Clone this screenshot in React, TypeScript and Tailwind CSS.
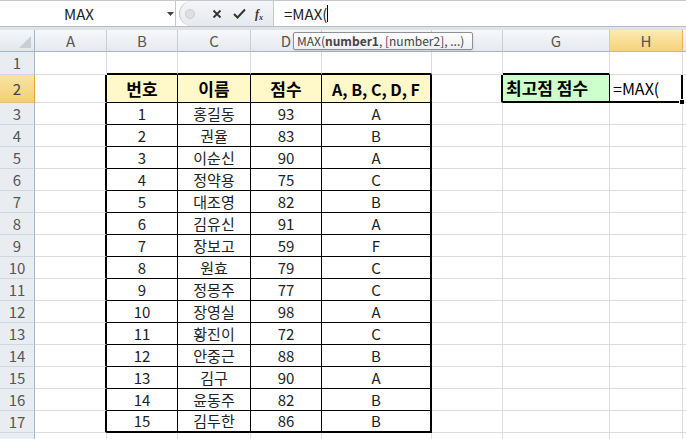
import React from 'react';

const FONT = { fontFamily: '"Noto Sans CJK KR", "Noto Sans", sans-serif' };

const students: [number, string, number, string][] = [
  [1, '홍길동', 93, 'A'],
  [2, '권율', 83, 'B'],
  [3, '이순신', 90, 'A'],
  [4, '정약용', 75, 'C'],
  [5, '대조영', 82, 'B'],
  [6, '김유신', 91, 'A'],
  [7, '장보고', 59, 'F'],
  [8, '원효', 79, 'C'],
  [9, '정몽주', 77, 'C'],
  [10, '장영실', 98, 'A'],
  [11, '황진이', 72, 'C'],
  [12, '안중근', 88, 'B'],
  [13, '김구', 90, 'A'],
  [14, '윤동주', 82, 'B'],
  [15, '김두한', 86, 'B'],
];

const RIGHT = {
  g: 'border-r border-r-[#dadcdd]',
  b: 'border-r border-r-black',
  B: 'border-r-2 border-r-black',
  n: '',
};
const BOTTOM = {
  g: 'border-b border-b-[#dadcdd]',
  b: 'border-b border-b-black',
  B: 'border-b-2 border-b-black',
};

type Edge = 'g' | 'b' | 'B';

function Cell({
  r = 'g',
  b = 'g',
  className = '',
  children,
}: {
  r?: Edge | 'n';
  b?: Edge;
  className?: string;
  children?: React.ReactNode;
}) {
  return (
    <div className={`flex items-center justify-center min-h-0 overflow-visible whitespace-nowrap ${RIGHT[r]} ${BOTTOM[b]} ${className}`}>
      {children}
    </div>
  );
}

function RowHead({ n, active = false }: { n?: number; active?: boolean }) {
  return (
    <div
      className={`flex items-center justify-center border-r border-b text-[15px] ${
        active
          ? 'bg-gradient-to-b from-[#f9e3a3] to-[#f2cf72] border-r-[#e0a93c] border-b-[#e5c27a] text-[#444]'
          : 'bg-[#e9edf2] border-r-[#9eb6ce] border-b-[#d0d7e0] text-[#555]'
      }`}
    >
      {n}
    </div>
  );
}

function FormulaBar() {
  return (
    <div className="h-[30px] flex flex-col bg-[#dfe3e8] border-t border-[#c4c9cf]">
      <div className="h-[26px] flex items-stretch bg-white border-b border-[#b9bec5]">
        <div className="w-[176px] flex items-center border-r border-[#c4c9cf] relative">
          <span className="text-[15px] text-[#222] ml-[64px]">MAX</span>
          <svg className="absolute left-[167px] top-[11px]" width="7" height="4" viewBox="0 0 7 4">
            <path d="M0 0h7L3.5 4z" fill="#444" />
          </svg>
        </div>
        <div className="w-[95px] flex items-center bg-gradient-to-b from-[#f4f5f7] to-[#e6e9ed] rounded-l-[13px] border-l border-[#c0c5cc] ml-[3px] border-r border-r-[#c4c9cf]">
          <div className="w-[10px] h-[10px] rounded-full bg-[#dcdfe3] border border-[#c8ccd1] ml-[5px]" />
          <svg className="ml-[17px]" width="10" height="10" viewBox="0 0 10 10">
            <path d="M1.5 1.5l7 7M8.5 1.5l-7 7" stroke="#333" strokeWidth="1.8" />
          </svg>
          <svg className="ml-[11px]" width="13" height="11" viewBox="0 0 13 11">
            <path d="M1 6l3.5 3.5L12 1.5" stroke="#333" strokeWidth="2" fill="none" />
          </svg>
          <span className="ml-[9px] text-[12px] italic font-bold text-[#333]" style={{ fontFamily: '"Liberation Serif", serif' }}>
            f<sub className="text-[8px]">x</sub>
          </span>
        </div>
        <div className="flex-1 flex items-center pl-[10px]">
          <span className="text-[15px] text-[#222]">=MAX(</span>
          <span className="w-px h-[17px] bg-black" />
        </div>
      </div>
    </div>
  );
}

export default function App() {
  const cols = ['A', 'B', 'C', 'D', 'E', 'F', 'G', 'H'];
  const grid =
    'grid grid-cols-[35px_72px_71px_73px_71px_110px_71px_107px_73px_1fr] grid-rows-[22px_23px_28px_repeat(16,22px)]';

  return (
    <div className="w-[686px] h-[439px] overflow-hidden bg-white relative leading-[18px]" style={FONT}>
      <FormulaBar />

      <div className={grid}>
        {/* column headers */}
        <div className="bg-gradient-to-b from-[#f5f7f9] to-[#e3e7ec] border-r border-b border-r-[#9eb6ce] border-b-[#9eb6ce] flex items-end justify-end p-[3px]">
          <svg width="12" height="12" viewBox="0 0 12 12">
            <path d="M12 0v12H0z" fill="#c9ced5" />
          </svg>
        </div>
        {cols.map((c) => (
          <div
            key={c}
            className={`flex items-center justify-center text-[15px] border-r border-b ${
              c === 'H'
                ? 'bg-gradient-to-b from-[#fcebb0] to-[#f4d27a] border-r-[#e0b85a] border-b-[#e0b85a] text-[#555]'
                : 'bg-gradient-to-b from-[#f7f8fa] to-[#e6e9ee] border-r-[#c9ced6] border-b-[#9eb6ce] text-[#555]'
            }`}
          >
            {c}
          </div>
        ))}
        <div className="bg-gradient-to-b from-[#f7f8fa] to-[#e6e9ee] border-b border-b-[#9eb6ce]" />

        {/* row 1 */}
        <RowHead n={1} />
        <Cell />
        <Cell b="B" />
        <Cell b="B" />
        <Cell b="B" />
        <Cell b="B" />
        <Cell />
        <Cell b="B" />
        <Cell b="g" className="border-b-[#9a9a9a]" />
        <Cell r="n" />

        {/* row 2 */}
        <RowHead n={2} active />
        <Cell r="B" />
        <Cell r="b" b="b" className="bg-[#fff9c9] font-bold text-[17px]">번호</Cell>
        <Cell r="b" b="b" className="bg-[#fff9c9] font-bold text-[17px]">이름</Cell>
        <Cell r="b" b="b" className="bg-[#fff9c9] font-bold text-[17px]">점수</Cell>
        <Cell r="B" b="b" className="bg-[#fff9c9] font-bold text-[16px]">A, B, C, D, F</Cell>
        <Cell r="B" />
        <Cell r="b" b="B" className="bg-[#ccffcc] font-bold text-[17px] justify-start pl-[3px]">최고점 점수</Cell>
        <Cell r="B" b="B" className="justify-start pl-[3px] text-[16px] relative">
          =MAX(
          <span className="absolute right-[-4px] bottom-[-4px] w-[6px] h-[6px] bg-black border border-white" />
        </Cell>
        <Cell r="n" />

        {/* data rows */}
        {students.map(([no, name, score, grade], i) => {
          const last = i === students.length - 1;
          const bb: Edge = last ? 'B' : 'b';
          return (
            <React.Fragment key={no}>
              <RowHead n={i + 3} />
              <Cell r="B" />
              <Cell r="b" b={bb} className="text-[15px] text-[#222]">{no}</Cell>
              <Cell r="b" b={bb} className="text-[15px] text-[#222]">{name}</Cell>
              <Cell r="b" b={bb} className="text-[15px] text-[#222]">{score}</Cell>
              <Cell r="B" b={bb} className="text-[15px] text-[#222]">{grade}</Cell>
              <Cell />
              <Cell />
              <Cell />
              <Cell r="n" />
            </React.Fragment>
          );
        })}

        {/* row 18, mostly below the fold */}
        <RowHead />
        <Cell />
        <Cell />
        <Cell />
        <Cell />
        <Cell />
        <Cell />
        <Cell />
        <Cell />
        <Cell r="n" />
      </div>

      {/* function argument tooltip */}
      <div className="absolute left-[293px] top-[32px] w-[180px] h-[18px] px-[3px] flex items-center whitespace-nowrap rounded-[2px] border border-[#8d9096] bg-gradient-to-b from-white to-[#eef0f3] text-[12px] text-[#444] leading-none shadow-sm">
        MAX(<span className="font-bold">number1</span>, [number2], ...)
      </div>
    </div>
  );
}
